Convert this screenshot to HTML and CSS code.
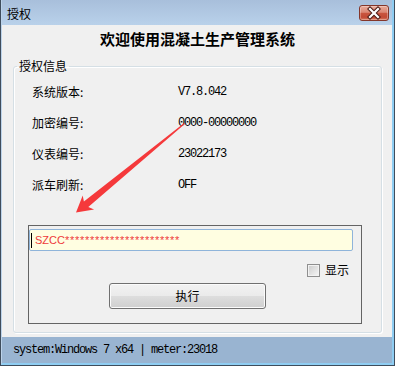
FILE: index.html
```html
<!DOCTYPE html>
<html lang="zh-CN">
<head>
<meta charset="utf-8">
<title>授权</title>
<link rel="stylesheet" href="styles.css">
</head>
<body>
<div class="window">
  <div class="frame">
    <div class="titlebar">
      <span class="title">授权</span>
      <div class="close">
        <svg width="30" height="16" viewBox="0 0 30 16">
          <path d="M11 4 L19 12 M19 4 L11 12" stroke="#4a1a14" stroke-width="4.2" stroke-linecap="square" fill="none"/>
          <path d="M11 4 L19 12 M19 4 L11 12" stroke="#ffffff" stroke-width="2.2" stroke-linecap="square" fill="none"/>
        </svg>
      </div>
    </div>
    <div class="client">
      <h1 class="heading">欢迎使用混凝土生产管理系统</h1>
      <fieldset class="group">
        <legend class="legend">授权信息</legend>
        <div class="group-body">
          <div class="rows">
            <div class="row"><span class="label">系统版本:</span><span class="value">V7.8.042</span></div>
            <div class="row"><span class="label">加密编号:</span><span class="value">0000-00000000</span></div>
            <div class="row"><span class="label">仪表编号:</span><span class="value">23022173</span></div>
            <div class="row"><span class="label">派车刷新:</span><span class="value">OFF</span></div>
          </div>
          <div class="keybox">
            <div class="input"><span class="caret"></span><span class="key">SZCC<span class="stars">***********************</span></span></div>
            <label class="show"><span class="check"></span><span>显示</span></label>
            <div class="btn">执行</div>
          </div>
        </div>
      </fieldset>
    </div>
    <div class="status">system:Windows 7 x64 | meter:23018</div>
  </div>
  <svg class="arrow" width="395" height="366" viewBox="0 0 395 366">
    <polygon points="183.8,123.9 87.3,207.0 93.1,209.4 75,212.5 81.7,195.4 82.9,201.6 183.2,123.1" fill="#f5393b"/>
  </svg>
</div>
</body>
</html>
```
FILE: styles.css
```css
html, body {
  margin: 0;
  padding: 0;
}
body {
  width: 395px;
  height: 366px;
  overflow: hidden;
  font-family: "Noto Sans CJK SC", "Liberation Sans", sans-serif;
  color: #000;
}
.window {
  position: relative;
  width: 395px;
  height: 366px;
  box-sizing: border-box;
  border: 1px solid #3f4d5c;
  border-top: 0;
  display: flex;
}
.frame {
  flex: 1;
  min-width: 0;
  display: flex;
  flex-direction: column;
  border-left: 1px solid #bcd3ea;
  border-right: 2px solid #8fcdf2;
  border-bottom: 2px solid #8fcdf2;
}
.titlebar {
  height: 25px;
  flex: none;
  display: flex;
  align-items: center;
  justify-content: space-between;
  padding: 0 3px 0 5px;
  background: linear-gradient(#a8bfdb, #b9d1ea);
}
.title {
  font-size: 12px;
  line-height: 14px;
  padding-top: 2px;
}
.close {
  width: 30px;
  height: 16px;
  box-sizing: border-box;
  border: 1px solid #84362a;
  border-radius: 3px;
  background: linear-gradient(#e9aa9a 0%, #db8774 45%, #c9553f 52%, #c24a35 80%, #d87a60 100%);
  box-shadow: inset 0 0 0 1px rgba(255, 255, 255, 0.3);
  display: flex;
  align-items: center;
  justify-content: center;
  overflow: hidden;
}
.close svg {
  display: block;
  flex: none;
}
.client {
  flex: 1;
  min-height: 0;
  background: #f0f0f0;
  display: flex;
  flex-direction: column;
  padding: 4px 10px 4px 11px;
}
.heading {
  margin: 0 0 10px;
  font-size: 15px;
  line-height: 20px;
  font-weight: bold;
  text-align: center;
}
.group {
  flex: 1;
  min-width: 0;
  margin: 0;
  padding: 0;
  border: 1px solid #d5dfe5;
  border-radius: 3px;
  box-shadow: inset 1px 1px 0 #ffffff, 1px 1px 0 #ffffff;
}
.legend {
  margin-left: 3px;
  padding: 0 2px;
  font-size: 12px;
  line-height: 14px;
}
.group-body {
  display: flex;
  flex-direction: column;
}
.rows {
  padding: 3px 0 0 18px;
  display: flex;
  flex-direction: column;
}
.row {
  height: 31px;
  display: flex;
  align-items: center;
}
.label {
  width: 146px;
  font-size: 12px;
  line-height: 14px;
}
.value {
  font-family: "Liberation Mono", monospace;
  font-size: 12px;
  letter-spacing: -1.2px;
  line-height: 14px;
}
.keybox {
  margin: 25px 0 0 14px;
  width: 334px;
  box-sizing: border-box;
  border: 1px solid #646464;
  padding: 3px 8px 14px 0;
  display: flex;
  flex-direction: column;
}
.input {
  height: 22px;
  box-sizing: border-box;
  border: 1px solid #8fb4da;
  border-radius: 2px;
  background: #fffee1;
  display: flex;
  align-items: center;
  padding-left: 1px;
}
.caret {
  width: 1px;
  height: 15px;
  background: #000;
}
.key {
  margin-left: 3px;
  color: #ee3b3b;
  font-family: "Liberation Sans", sans-serif;
  font-size: 11px;
  line-height: 14px;
}
.stars {
  letter-spacing: 0.72px;
}
.show {
  align-self: flex-end;
  margin: 10px 4px 0 0;
  height: 18px;
  display: flex;
  align-items: center;
  gap: 5px;
  font-size: 12px;
  line-height: 14px;
}
.check {
  width: 13px;
  height: 13px;
  box-sizing: border-box;
  border: 1px solid #8f8f8f;
  background: linear-gradient(135deg, #cbcbcb, #f7f7f7);
  box-shadow: inset 0 0 0 1px #f2f2f2;
}
.btn {
  margin: 4px 0 0 80px;
  width: 157px;
  height: 26px;
  box-sizing: border-box;
  border: 1px solid #707070;
  border-radius: 3px;
  background: linear-gradient(#f2f2f2 0%, #ebebeb 48%, #dddddd 52%, #cfcfcf 100%);
  box-shadow: inset 0 0 0 1px #fbfbfb;
  display: flex;
  align-items: center;
  justify-content: center;
  font-size: 12px;
  line-height: 14px;
}
.status {
  height: 26px;
  flex: none;
  background: #99b4d1;
  display: flex;
  align-items: center;
  padding-left: 11px;
  font-family: "Liberation Mono", monospace;
  font-size: 12px;
  letter-spacing: -1.2px;
}
.arrow {
  position: absolute;
  left: 0;
  top: 0;
  pointer-events: none;
}
```
